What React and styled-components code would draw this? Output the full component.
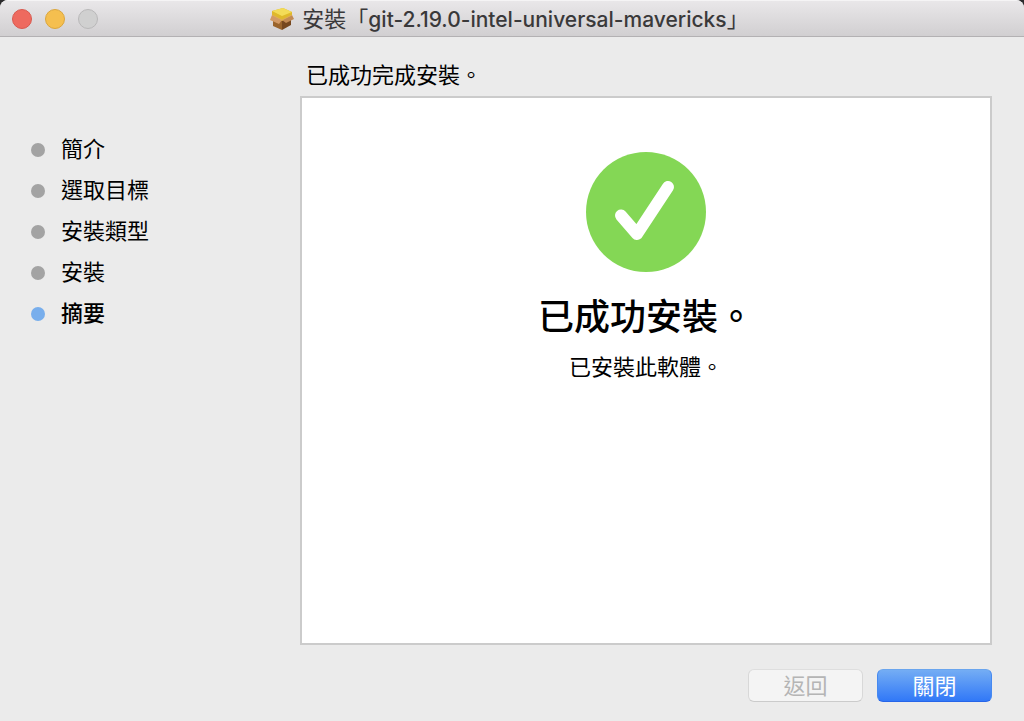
import React from "react";
import styled, { createGlobalStyle } from "styled-components";

const GlobalStyle = createGlobalStyle`
  * { box-sizing: border-box; }
  body {
    margin: 0;
    background: #2b2b2d;
    color: #000;
    font: 22px/32px "Noto Sans CJK TC", sans-serif;
  }
`;

const Window = styled.div`
  min-height: 100vh;
  display: flex;
  flex-direction: column;
  background: #ebebeb;
  border-radius: 8px 8px 0 0;
  overflow: hidden;
`;

const TitleBar = styled.header`
  display: grid;
  grid-template-columns: 1fr auto 1fr;
  align-items: center;
  height: 37px;
  padding: 0 12px;
  background: linear-gradient(#e9e7e9, #d1cfd1);
  border-top: 1px solid #f5f4f5;
  border-bottom: 1px solid #b3b1b3;
`;

const Controls = styled.div`
  display: flex;
  gap: 13px;
`;

const Control = styled.button`
  width: 20px;
  height: 20px;
  padding: 0;
  border: 1px solid ${(p) => p.$edge};
  border-radius: 50%;
  background: ${(p) => p.$fill};
`;

const Title = styled.h1`
  display: flex;
  align-items: center;
  gap: 7px;
  margin: 0;
  padding-right: 6px;
  color: #3a393a;
  font-size: 22px;
  line-height: 32px;
  font-weight: 400;
  white-space: nowrap;
`;

const PackageName = styled.span`
  font-family: Inter, sans-serif;
  font-size: 21px;
  font-weight: 500;
`;

const Content = styled.div`
  flex: 1;
  display: grid;
  grid-template-columns: 300px 1fr;
  padding: 20px 32px 19px 0;
`;

const Steps = styled.ol`
  display: flex;
  flex-direction: column;
  gap: 9px;
  margin: 0;
  padding: 74px 0 0 31px;
  list-style: none;
`;

const Step = styled.li`
  display: flex;
  align-items: center;
  gap: 16px;
  height: 32px;
  font-weight: ${(p) => (p.$current ? 500 : 400)};

  &::before {
    content: "";
    width: 14px;
    height: 14px;
    margin-top: 6px;
    border-radius: 50%;
    background: ${(p) => (p.$current ? "#78aeec" : "#a3a3a3")};
  }
`;

const Main = styled.main`
  display: flex;
  flex-direction: column;
`;

const Status = styled.p`
  margin: 0 0 7px 6px;
`;

const Panel = styled.section`
  flex: 1;
  display: flex;
  flex-direction: column;
  align-items: center;
  padding: 54px 20px 20px;
  background: #fff;
  border: 2px solid #cbcbcb;
`;

const Heading = styled.h2`
  margin: 18px 0 11px;
  font-size: 36px;
  line-height: 48px;
  font-weight: 500;
`;

const Message = styled.p`
  margin: 0;
`;

const Footer = styled.footer`
  display: flex;
  justify-content: flex-end;
  gap: 14px;
  padding-top: 24px;
`;

const Button = styled.button`
  width: 115px;
  height: 33px;
  padding: 0 0 4px;
  border: 1px solid;
  border-color: ${(p) => (p.$primary ? "#6aa5ee #4689f0 #2765e8" : "#dedede #d8d8d8 #cbcbcb")};
  border-radius: 6px;
  background: ${(p) => (p.$primary ? "linear-gradient(#74adf4, #3178f7)" : "#f4f4f4")};
  color: ${(p) => (p.$primary ? "#fff" : "#b5b5b5")};
  font: inherit;
  line-height: 26px;
`;

function PackageIcon() {
  return (
    <svg width="26" height="24" viewBox="0 0 26 24" aria-hidden="true">
      <path d="M4 9 13 13v10L4 19z" fill="#9a642c" />
      <path d="M13 13 22 9v9l-9 5z" fill="#76471f" />
      <path d="M3 4 14 1l9 4v5l-10 4-10-5z" fill="#dfb92b" />
      <path d="M3 4 14 1l9 4-10 4z" fill="#f3dc58" />
      <path d="M3 8 1 13l9 4 3-4z" fill="#d29a66" />
      <path d="m23 8 2 4-8 4-4-3z" fill="#c28a54" />
      <path d="m3 8 10 5 10-5" fill="none" stroke="#e0ad58" />
    </svg>
  );
}

function SuccessIcon() {
  return (
    <svg width="120" height="120" viewBox="0 0 120 120" role="img" aria-label="成功">
      <circle cx="60" cy="60" r="60" fill="#84d755" />
      <path
        d="M35 63.5 51 82 82 35"
        fill="none"
        stroke="#fff"
        strokeWidth="12"
        strokeLinecap="round"
        strokeLinejoin="round"
      />
    </svg>
  );
}

const steps = ["簡介", "選取目標", "安裝類型", "安裝", "摘要"];

export default function App() {
  return (
    <Window lang="zh-Hant">
      <GlobalStyle />
      <TitleBar>
        <Controls>
          <Control aria-label="關閉視窗" $fill="#ee6a5f" $edge="#d9594f" />
          <Control aria-label="縮到最小" $fill="#f5bf4f" $edge="#dba63c" />
          <Control aria-label="縮放" disabled $fill="#d0d0d0" $edge="#b9b8b9" />
        </Controls>
        <Title>
          <PackageIcon />
          <span>
            安裝「<PackageName>git-2.19.0-intel-universal-mavericks</PackageName>」
          </span>
        </Title>
      </TitleBar>
      <Content>
        <Steps>
          {steps.map((name, i) => {
            const current = i === steps.length - 1;
            return (
              <Step key={name} $current={current} aria-current={current ? "step" : undefined}>
                {name}
              </Step>
            );
          })}
        </Steps>
        <Main>
          <Status>已成功完成安裝。</Status>
          <Panel>
            <SuccessIcon />
            <Heading>已成功安裝。</Heading>
            <Message>已安裝此軟體。</Message>
          </Panel>
          <Footer>
            <Button disabled>返回</Button>
            <Button $primary>關閉</Button>
          </Footer>
        </Main>
      </Content>
    </Window>
  );
}
